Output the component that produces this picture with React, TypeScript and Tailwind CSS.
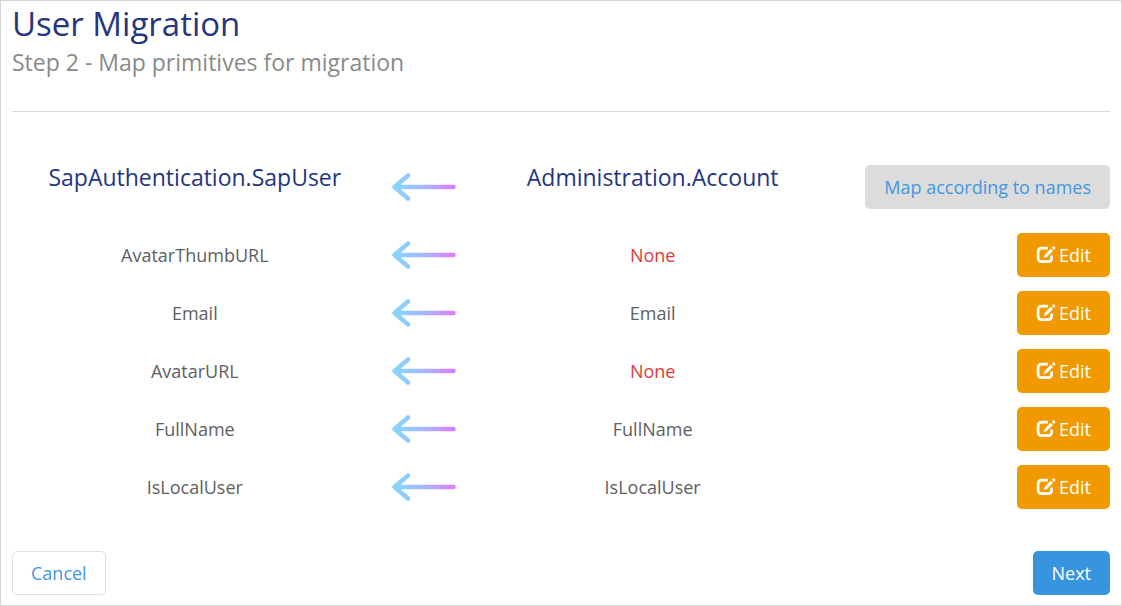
import React from "react";

type Mapping = { target: string; source: string | null };

const mappings: Mapping[] = [
  { target: "AvatarThumbURL", source: null },
  { target: "Email", source: "Email" },
  { target: "AvatarURL", source: null },
  { target: "FullName", source: "FullName" },
  { target: "IsLocalUser", source: "IsLocalUser" },
];

function Arrow({ id }: { id: string }) {
  return (
    <svg className="h-7 w-16" viewBox="0 0 64 28" fill="none" aria-hidden="true">
      <defs>
        <linearGradient id={id} gradientUnits="userSpaceOnUse" x1="0" y1="0" x2="64" y2="0">
          <stop offset="0.05" stopColor="#86d6ff" />
          <stop offset="0.5" stopColor="#a4b8ff" />
          <stop offset="1" stopColor="#e07aff" />
        </linearGradient>
      </defs>
      <path
        d="M2.5 14H61.5M16 2.5L2.5 14L16 25.5"
        stroke={`url(#${id})`}
        strokeWidth="4.5"
        strokeLinecap="round"
        strokeLinejoin="round"
      />
    </svg>
  );
}

function EditIcon() {
  return (
    <svg className="h-5 w-5" viewBox="0 0 20 20" fill="none" aria-hidden="true">
      <path d="M12 3.1H6Q2.1 3.1 2.1 7V12.8Q2.1 16.7 6 16.7H11.8Q15.7 16.7 15.7 12.8V10.5" stroke="white" strokeWidth="2.7" />
      <path d="M7.8 12.9L8.7 9.9L14.7 3.7L17 6L10.9 12.1Z" fill="white" />
      <path d="M15.7 2.7L17 1.4Q17.5 1 18.1 1.5L19.2 2.6Q19.7 3.1 19.2 3.7L17.9 5Z" fill="white" />
    </svg>
  );
}

export default function App() {
  return (
    <main className="min-h-screen border border-[#d5d5d5] bg-white px-[11px] pb-[10px] pt-[3px] font-['Open_Sans',sans-serif] text-lg text-[#606060]">
      <header className="border-b border-[#d9d9d9] pb-[31px]">
        <h1 className="text-[33px] leading-10 text-[#24367e]">User Migration</h1>
        <p className="text-[23px] leading-9 text-[#8a8a8a]">Step 2 - Map primitives for migration</p>
      </header>
      <table className="mt-[45px] w-full table-fixed border-collapse text-center">
        <colgroup>
          <col className="w-[33.3%]" />
          <col className="w-[8.4%]" />
          <col className="w-[33.3%]" />
          <col className="w-[25%]" />
        </colgroup>
        <thead>
          <tr className="h-[69px] text-[23px] text-[#24367e]">
            <th className="pb-7 font-normal">SapAuthentication.SapUser</th>
            <th className="pb-[10px]"><span className="flex justify-center"><Arrow id="arrow-head" /></span></th>
            <th className="pb-7 font-normal">Administration.Account</th>
            <th className="pb-[10px] font-normal">
              <button type="button" className="ml-auto block h-11 whitespace-nowrap rounded-[5px] bg-[#dcdcdc] px-[19px] text-lg text-[#4397e0]">Map according to names</button>
            </th>
          </tr>
        </thead>
        <tbody>
          {mappings.map(({ target, source }) => (
            <tr key={target} className="h-[58px]">
              <td>{target}</td>
              <td><span className="flex justify-center"><Arrow id={`arrow-${target}`} /></span></td>
              <td className={source ? "" : "text-[#e03a35]"}>{source ?? "None"}</td>
              <td>
                <button type="button" className="ml-auto flex h-11 items-center gap-[3px] rounded-[5px] bg-[#f09a00] px-[19px] text-white"><EditIcon />Edit</button>
              </td>
            </tr>
          ))}
        </tbody>
      </table>
      <footer className="mt-[35px] flex justify-between">
        <button type="button" className="h-11 rounded-[5px] border border-[#e0e0e0] px-[18px] text-[#4397e0]">Cancel</button>
        <button type="button" className="h-11 rounded-[5px] bg-[#3794df] px-[19px] text-white">Next</button>
      </footer>
    </main>
  );
}
